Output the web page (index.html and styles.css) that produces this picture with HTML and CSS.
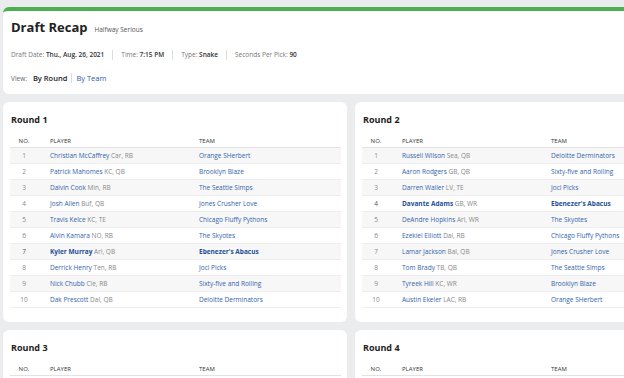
FILE: index.html
```html
<!DOCTYPE html>
<html>
<head>
<meta charset="utf-8">
<link rel="stylesheet" href="styles.css">
</head>
<body>
<div class="page">
  <section class="card header">
    <div class="title-row">
      <h1 class="title">Draft Recap</h1>
      <span class="subtitle">Halfway Serious</span>
    </div>
    <div class="meta">
      <span class="meta-item">Draft Date: <b>Thu., Aug. 26, 2021</b></span>
      <span class="meta-item">Time: <b>7:15 PM</b></span>
      <span class="meta-item">Type: <b>Snake</b></span>
      <span class="meta-item">Seconds Per Pick: <b>90</b></span>
    </div>
    <div class="view">
      <span class="view-label">View:</span>
      <span class="view-active">By Round</span>
      <span class="view-link">By Team</span>
    </div>
  </section>

  <div class="rounds">
    <section class="card round">
      <h2 class="round-title">Round 1</h2>
      <div class="table">
        <div class="row head"><span class="c-no">NO.</span><span class="c-pl">PLAYER</span><span class="c-tm">TEAM</span></div>
        <div class="row"><span class="c-no">1</span><span class="c-pl"><a>Christian McCaffrey</a> Car, RB</span><span class="c-tm"><a>Orange SHerbert</a></span></div>
        <div class="row"><span class="c-no">2</span><span class="c-pl"><a>Patrick Mahomes</a> KC, QB</span><span class="c-tm"><a>Brooklyn Blaze</a></span></div>
        <div class="row"><span class="c-no">3</span><span class="c-pl"><a>Dalvin Cook</a> Min, RB</span><span class="c-tm"><a>The Seattle Simps</a></span></div>
        <div class="row"><span class="c-no">4</span><span class="c-pl"><a>Josh Allen</a> Buf, QB</span><span class="c-tm"><a>Jones Crusher Love</a></span></div>
        <div class="row"><span class="c-no">5</span><span class="c-pl"><a>Travis Kelce</a> KC, TE</span><span class="c-tm"><a>Chicago Fluffy Pythons</a></span></div>
        <div class="row"><span class="c-no">6</span><span class="c-pl"><a>Alvin Kamara</a> NO, RB</span><span class="c-tm"><a>The Skyotes</a></span></div>
        <div class="row mine"><span class="c-no">7</span><span class="c-pl"><a>Kyler Murray</a> Ari, QB</span><span class="c-tm"><a>Ebenezer's Abacus</a></span></div>
        <div class="row"><span class="c-no">8</span><span class="c-pl"><a>Derrick Henry</a> Ten, RB</span><span class="c-tm"><a>Joci Picks</a></span></div>
        <div class="row"><span class="c-no">9</span><span class="c-pl"><a>Nick Chubb</a> Cle, RB</span><span class="c-tm"><a>Sixty-five and Rolling</a></span></div>
        <div class="row"><span class="c-no">10</span><span class="c-pl"><a>Dak Prescott</a> Dal, QB</span><span class="c-tm"><a>Deloitte Derminators</a></span></div>
      </div>
    </section>

    <section class="card round">
      <h2 class="round-title">Round 2</h2>
      <div class="table">
        <div class="row head"><span class="c-no">NO.</span><span class="c-pl">PLAYER</span><span class="c-tm">TEAM</span></div>
        <div class="row"><span class="c-no">1</span><span class="c-pl"><a>Russell Wilson</a> Sea, QB</span><span class="c-tm"><a>Deloitte Derminators</a></span></div>
        <div class="row"><span class="c-no">2</span><span class="c-pl"><a>Aaron Rodgers</a> GB, QB</span><span class="c-tm"><a>Sixty-five and Rolling</a></span></div>
        <div class="row"><span class="c-no">3</span><span class="c-pl"><a>Darren Waller</a> LV, TE</span><span class="c-tm"><a>Joci Picks</a></span></div>
        <div class="row mine"><span class="c-no">4</span><span class="c-pl"><a>Davante Adams</a> GB, WR</span><span class="c-tm"><a>Ebenezer's Abacus</a></span></div>
        <div class="row"><span class="c-no">5</span><span class="c-pl"><a>DeAndre Hopkins</a> Ari, WR</span><span class="c-tm"><a>The Skyotes</a></span></div>
        <div class="row"><span class="c-no">6</span><span class="c-pl"><a>Ezekiel Elliott</a> Dal, RB</span><span class="c-tm"><a>Chicago Fluffy Pythons</a></span></div>
        <div class="row"><span class="c-no">7</span><span class="c-pl"><a>Lamar Jackson</a> Bal, QB</span><span class="c-tm"><a>Jones Crusher Love</a></span></div>
        <div class="row"><span class="c-no">8</span><span class="c-pl"><a>Tom Brady</a> TB, QB</span><span class="c-tm"><a>The Seattle Simps</a></span></div>
        <div class="row"><span class="c-no">9</span><span class="c-pl"><a>Tyreek Hill</a> KC, WR</span><span class="c-tm"><a>Brooklyn Blaze</a></span></div>
        <div class="row"><span class="c-no">10</span><span class="c-pl"><a>Austin Ekeler</a> LAC, RB</span><span class="c-tm"><a>Orange SHerbert</a></span></div>
      </div>
    </section>

    <section class="card round">
      <h2 class="round-title">Round 3</h2>
      <div class="table">
        <div class="row head"><span class="c-no">NO.</span><span class="c-pl">PLAYER</span><span class="c-tm">TEAM</span></div>
      </div>
    </section>

    <section class="card round">
      <h2 class="round-title">Round 4</h2>
      <div class="table">
        <div class="row head"><span class="c-no">NO.</span><span class="c-pl">PLAYER</span><span class="c-tm">TEAM</span></div>
      </div>
    </section>
  </div>
</div>
</body>
</html>
```

FILE: styles.css
```css
html, body {
  margin: 0;
  padding: 0;
  overflow: hidden;
  background: #ebecee;
}
body {
  font-family: "Open Sans", "Noto Sans", sans-serif;
  color: #333;
}
.page {
  width: 700px;
  padding: 7px 0 0 3px;
  display: flex;
  flex-direction: column;
  gap: 8px;
}
.card {
  background: #fff;
  border-radius: 6px;
}
.header {
  border-top: 4px solid #4caf50;
  padding: 7px 8px 11px;
  display: flex;
  flex-direction: column;
}
.title-row {
  display: flex;
  align-items: baseline;
  gap: 7px;
  height: 20px;
}
.title {
  margin: 0;
  font-size: 13px;
  font-weight: 700;
  color: #222;
}
.subtitle {
  font-size: 6.5px;
  color: #555;
}
.meta {
  display: flex;
  margin-top: 12px;
  font-size: 6.5px;
  color: #777;
  height: 10px;
  align-items: center;
}
.meta b {
  color: #333;
  font-weight: 600;
}
.meta-item {
  padding: 0 8px;
  border-left: 1px solid #ddd;
  line-height: 10px;
}
.meta-item:first-child {
  padding-left: 0;
  border-left: none;
}
.view {
  display: flex;
  align-items: center;
  margin-top: 13px;
  height: 10px;
}
.view-label {
  font-size: 6.5px;
  color: #666;
  margin-right: 6px;
}
.view-active {
  font-size: 7.5px;
  color: #222;
  font-weight: 600;
  padding-right: 4px;
  border-right: 1px solid #ddd;
  line-height: 10px;
}
.view-link {
  font-size: 7.5px;
  color: #2a5da8;
  padding-left: 4px;
}
.rounds {
  display: grid;
  grid-template-columns: 344px 344px;
  gap: 8px;
}
.round {
  padding: 12px 6px 14px 7px;
}
.round-title {
  margin: 0 0 8px 1px;
  font-size: 9px;
  font-weight: 700;
  color: #222;
  line-height: 12px;
}
.table {
  display: flex;
  flex-direction: column;
  font-size: 6.5px;
}
.row {
  display: grid;
  grid-template-columns: 28px 151px 1fr;
  height: 16px;
  align-items: center;
  border-bottom: 1px solid #eee;
  box-sizing: border-box;
  color: #888;
}
.row:nth-child(even) {
  background: #f7f7f8;
}
.row.head {
  height: 14px;
  color: #333;
  font-size: 6px;
  border-bottom: 1px solid #e2e2e2;
  background: none;
}
.c-no {
  text-align: center;
}
.c-pl {
  padding-left: 12px;
  white-space: nowrap;
}
.c-tm {
  padding-left: 10px;
  white-space: nowrap;
}
a {
  color: #2f64ab;
}
.row.mine a {
  font-weight: 700;
  color: #1d4f96;
}
.row.mine .c-no {
  color: #555;
}
```
